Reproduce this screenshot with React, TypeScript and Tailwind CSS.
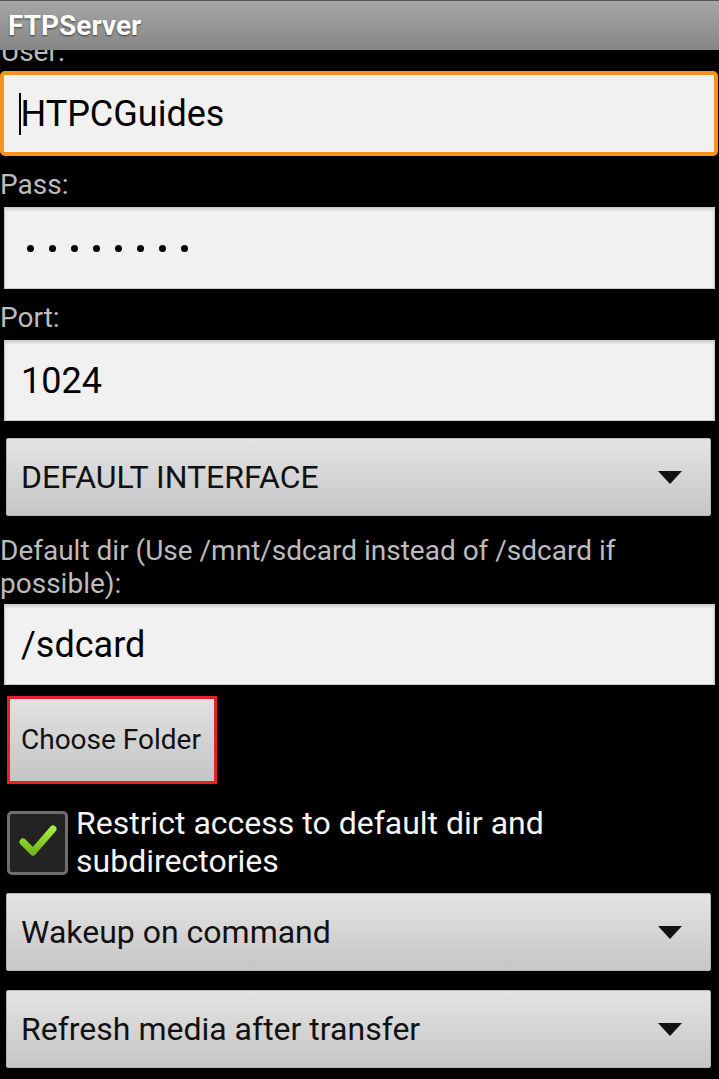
import React from 'react';

const font = "font-['Roboto','Noto_Sans',sans-serif]";

const Label = ({ children }: { children: React.ReactNode }) => (
  <div className="pt-[14px] pb-[7px] text-[28px] leading-[30px] text-[#bcbcbc]">{children}</div>
);

const Field = ({ children, h = 'h-[82px]' }: { children: React.ReactNode; h?: string }) => (
  <div
    className={`${h} mx-[4px] flex items-center px-[16px] bg-[#f1f1f1] border border-[#c9c9c9] shadow-[inset_0_2px_3px_rgba(0,0,0,0.12)] text-[36px] text-black`}
  >
    {children}
  </div>
);

const Arrow = () => (
  <svg width="24" height="13" viewBox="0 0 24 13">
    <path d="M0 0 H24 L12 13 Z" fill="#111" />
  </svg>
);

const Spinner = ({ label, className = '' }: { label: string; className?: string }) => (
  <div
    className={`ml-[6px] mr-[8px] h-[78px] flex items-center justify-between pl-[14px] pr-[28px] bg-gradient-to-b from-[#e4e4e4] to-[#c6c6c6] border border-[#b5b5b5] rounded-[2px] text-[32px] text-[#111] ${className}`}
  >
    <span>{label}</span>
    <Arrow />
  </div>
);

export default function App() {
  return (
    <div className={`w-[719px] h-[1079px] overflow-hidden bg-black ${font}`}>
      <div className="relative z-10 h-[50px] bg-gradient-to-b from-[#a6a6a6] to-[#868686] border-t border-[#555] flex items-center pl-[8px]">
        <span className="text-[28px] font-bold text-white [text-shadow:0_1px_2px_rgba(0,0,0,0.6)]">FTPServer</span>
      </div>

      <div className="h-[17px] overflow-hidden">
        <div className="mt-[-13px] pl-[1px] text-[28px] leading-[30px] text-[#bcbcbc]">User:</div>
      </div>

      <div className="mt-[4px] mr-[1px] h-[85px] flex items-center pl-[15px] pr-[16px] bg-[#f1f1f1] border-[4px] border-[#f7941d] rounded-[5px] text-[36px] text-black">
        <span className="w-[1.5px] h-[42px] bg-black" />
        <span>HTPCGuides</span>
      </div>

      <Label>Pass:</Label>
      <Field>
        <div className="flex gap-[15px] pl-[6px]">
          {Array.from({ length: 8 }).map((_, i) => (
            <span key={i} className="w-[7px] h-[7px] rounded-full bg-black" />
          ))}
        </div>
      </Field>

      <Label>Port:</Label>
      <Field h="h-[81px]">1024</Field>

      <Spinner label="DEFAULT INTERFACE" className="mt-[17px]" />

      <div className="pt-[18px] pb-[4px] text-[28px] leading-[33px] text-[#bcbcbc]">
        Default dir (Use /mnt/sdcard instead of /sdcard if
        <br />
        possible):
      </div>
      <Field h="h-[81px]">/sdcard</Field>

      <div className="mt-[11px] ml-[7px] w-[210px] h-[88px] border-[3px] border-[#e8202a] bg-gradient-to-b from-[#e2e2e2] to-[#c4c4c4] flex items-center pl-[11px] text-[28px] text-[#111]">
        Choose Folder
      </div>

      <div className="mt-[20px] flex items-start">
        <div className="mt-[7px] ml-[7px] w-[61px] h-[64px] shrink-0 rounded-[5px] border-[3px] border-[#6e6e6e] bg-[#232323] flex items-center justify-center">
          <svg width="55" height="58" viewBox="0 0 55 58">
            <defs>
              <linearGradient id="chk" x1="0" y1="0" x2="0" y2="1">
                <stop offset="0" stopColor="#a8ec3c" />
                <stop offset="1" stopColor="#72b81c" />
              </linearGradient>
            </defs>
            <path d="M13 28 L23 38 L43 15" fill="none" stroke="url(#chk)" strokeWidth="7" strokeLinecap="round" strokeLinejoin="round" />
          </svg>
        </div>
        <div className="ml-[8px] text-[32px] leading-[38px] text-[#f5f5f5]">
          Restrict access to default dir and
          <br />
          subdirectories
        </div>
      </div>

      <Spinner label="Wakeup on command" className="mt-[13px]" />
      <Spinner label="Refresh media after transfer" className="mt-[19px]" />
    </div>
  );
}
